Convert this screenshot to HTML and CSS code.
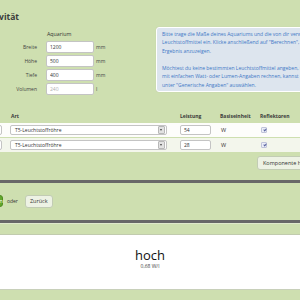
FILE: index.html
```html
<html>
<head>
<meta charset="utf-8">
<link rel="stylesheet" href="styles.css">
</head>
<body>
  <div class="page">
    <div class="titleWrap"><h1 class="title">Lichtintensivität</h1></div>

    <div class="top">
      <div class="dims">
        <div class="dimsHead">Aquarium</div>
        <div class="dim"><label>Breite</label><input class="field" value="1200"><span class="unit">mm</span></div>
        <div class="dim"><label>Höhe</label><input class="field" value="500"><span class="unit">mm</span></div>
        <div class="dim"><label>Tiefe</label><input class="field" value="400"><span class="unit">mm</span></div>
        <div class="dim"><label>Volumen</label><input class="field" value="240" disabled><span class="unit">l</span></div>
      </div>

      <div class="info">
        <p>Bitte trage die Maße deines Aquariums und die von dir verwendeten<br>
        Leuchtstoffmittel ein. Klicke anschließend auf "Berechnen", um das<br>
        Ergebnis anzuzeigen.</p>
        <p>Möchtest du keine bestimmten Leuchtstoffmittel angeben, sondern<br>
        mit einfachen Watt- oder Lumen-Angaben rechnen, kannst du dies<br>
        unter "Generische Angaben" auswählen.</p>
      </div>
    </div>

    <div class="lamps">
      <div class="lampRow lampHead">
        <span class="cCount">Anzahl</span>
        <span class="cType">Art</span>
        <span class="cPower">Leistung</span>
        <span class="cUnit">Basiseinheit</span>
        <span class="cRefl">Reflektoren</span>
      </div>
      <div class="lampRow">
        <span class="cCount"><input class="small" value="1"></span>
        <span class="cType"><div class="select"><span>T5-Leuchtstoffröhre</span><span class="arrow"></span></div></span>
        <span class="cPower"><input class="small" value="54"></span>
        <span class="cUnit">W</span>
        <span class="cRefl"><span class="check"></span></span>
      </div>
      <div class="lampRow alt">
        <span class="cCount"><input class="small" value="1"></span>
        <span class="cType"><div class="select"><span>T5-Leuchtstoffröhre</span><span class="arrow"></span></div></span>
        <span class="cPower"><input class="small" value="28"></span>
        <span class="cUnit">W</span>
        <span class="cRefl"><span class="check"></span></span>
      </div>
    </div>

    <div class="addRow"><button class="btn">Komponente hinzufügen</button></div>

    <div class="rule"></div>

    <div class="actions">
      <button class="btn go">Berechnen</button>
      <span class="or">oder</span>
      <button class="btn">Zurück</button>
    </div>

    <div class="rule"></div>

    <div class="band"></div>
    <div class="result">
      <div class="level">hoch</div>
      <div class="ratio">0,68 W/l</div>
    </div>
    <div class="band low"></div>
  </div>
</body>
</html>
```

FILE: styles.css
```css
body {
  margin: 0;
  overflow: hidden;
  background-color: #cedfb0;
  font-family: "Open Sans", "DejaVu Sans", sans-serif;
  color: #333;
}

.page {
  margin-left: -30px;
  width: 420px;
}

.titleWrap {
  display: flex;
  justify-content: flex-end;
  width: 49px;
  padding-top: 10px;
  height: 13px;
}
.title {
  margin: 0;
  font-size: 8.5px;
  line-height: 13px;
  font-weight: bold;
  white-space: nowrap;
  color: #3a3a3a;
}

.top {
  display: flex;
  margin-top: 4px;
}

.dims {
  width: 186px;
  padding-top: 3px;
  font-size: 5px;
}
.dimsHead {
  margin-left: 77px;
  line-height: 8px;
  height: 8px;
  margin-bottom: 3px;
  font-size: 5.3px;
}
.dim {
  display: flex;
  align-items: center;
  height: 12px;
  margin-bottom: 2px;
}
.dim label {
  width: 67px;
  text-align: right;
  margin-right: 9px;
  color: #444;
}
.field {
  box-sizing: border-box;
  width: 48px;
  height: 12px;
  border: 1px solid #c4c4c4;
  border-radius: 2px;
  background: #fff;
  padding: 0 0 0 3px;
  font-family: inherit;
  font-size: 5px;
  color: #333;
}
.field:disabled {
  color: #b0b0b0;
  background: #fff;
}
.unit {
  margin-left: 2px;
  color: #444;
}

.info {
  box-sizing: border-box;
  width: 200px;
  height: 65px;
  background-color: #dde5ee;
  border: 1px solid #fff;
  border-radius: 3px;
  box-shadow: 0 0 1px #b8c4a8;
  padding: 1.5px 5px 0 5px;
  font-size: 5px;
  line-height: 8.7px;
  color: #3d78c6;
  white-space: nowrap;
  overflow: hidden;
}
.info p {
  margin: 0 0 8px 0;
}

.lamps {
  margin-top: 15px;
  font-size: 5px;
}
.lampRow {
  display: flex;
  align-items: center;
  height: 14px;
  margin-bottom: 1px;
  background-color: #fdfdfb;
}
.lampRow.alt {
  background-color: #f3f6ec;
}
.lampRow.lampHead {
  height: 8px;
  margin-bottom: 3px;
  background: none;
  font-weight: bold;
  color: #3a3a3a;
}
.lampHead .cCount {
  visibility: hidden;
}
.cCount {
  width: 10px;
  padding-left: 10px;
  margin-right: 20px;
}
.cType {
  width: 169px;
  padding-left: 1px;
}
.lampRow .cType .select {
  margin-left: -1px;
}
.cPower {
  width: 40px;
}
.cUnit {
  width: 40px;
}
.lampRow:not(.lampHead) .cUnit {
  padding-left: 1px;
  font-size: 5.5px;
}

.small {
  box-sizing: border-box;
  width: 31px;
  height: 10px;
  border: 1px solid #c4c4c4;
  border-radius: 2px;
  background: #fff;
  padding: 0 0 0 3px;
  font-family: inherit;
  font-size: 5px;
  color: #333;
}
.cCount .small {
  width: 22px;
}

.select {
  box-sizing: border-box;
  display: flex;
  align-items: center;
  justify-content: space-between;
  width: 157px;
  height: 10px;
  border: 1px solid #c4c4c4;
  border-radius: 2px;
  background: #fff;
  padding: 0 1px 0 4px;
  font-size: 5px;
}
.arrow {
  position: relative;
  width: 5px;
  height: 6px;
  background: #e2e2e2;
  border: 1px solid #b8b8b8;
  border-radius: 1px;
}
.arrow::after {
  content: "";
  position: absolute;
  left: 1px;
  top: 2px;
  border-left: 1.5px solid transparent;
  border-right: 1.5px solid transparent;
  border-top: 2px solid #444;
}

.check {
  display: block;
  position: relative;
  box-sizing: border-box;
  width: 6px;
  height: 6px;
  border: 1px solid #c0c4da;
  background: #eceef8;
  border-radius: 1px;
}
.check::after {
  content: "";
  position: absolute;
  left: 1.5px;
  top: 0;
  width: 0.8px;
  height: 2.2px;
  border-right: 0.8px solid #5a66a0;
  border-bottom: 0.8px solid #5a66a0;
  transform: rotate(40deg);
}

.addRow {
  margin-top: 4px;
  padding-left: 287px;
  height: 14px;
}
.btn {
  box-sizing: border-box;
  height: 13px;
  border: 1px solid #c2ccb4;
  border-radius: 3px;
  background: #edf2e4;
  font-family: inherit;
  font-size: 5.5px;
  color: #333;
  padding: 0 4px;
  white-space: nowrap;
}
.addRow .btn {
  height: 14px;
  padding: 0 5px;
}

.rule {
  height: 3px;
  background-color: #686868;
  margin-top: 10px;
}

.actions {
  display: flex;
  align-items: center;
  height: 14px;
  margin-top: 11px;
  margin-bottom: 12px;
  font-size: 5px;
}
.btn.go {
  width: 33px;
  height: 12px;
  background: #62a82c;
  border-color: #4f8a22;
  color: #fff;
}
.or {
  margin: 0 7px 0 4px;
}
.actions + .rule {
  margin-top: 0;
}

.band {
  height: 10px;
  border-top: 1px solid #dfe9cc;
  border-bottom: 1px solid #c1cbae;
}
.band.low {
  border-top: none;
  border-bottom: 1px solid #c1cbae;
}

.result {
  height: 54px;
  background: #fff;
  border-bottom: 1px solid #c8d0ba;
  text-align: center;
  margin-left: 30px;
  width: 300px;
}
.level {
  padding-top: 13px;
  font-size: 13px;
  line-height: 14px;
  color: #111;
}
.ratio {
  font-size: 5px;
  line-height: 8px;
  color: #444;
}
```
